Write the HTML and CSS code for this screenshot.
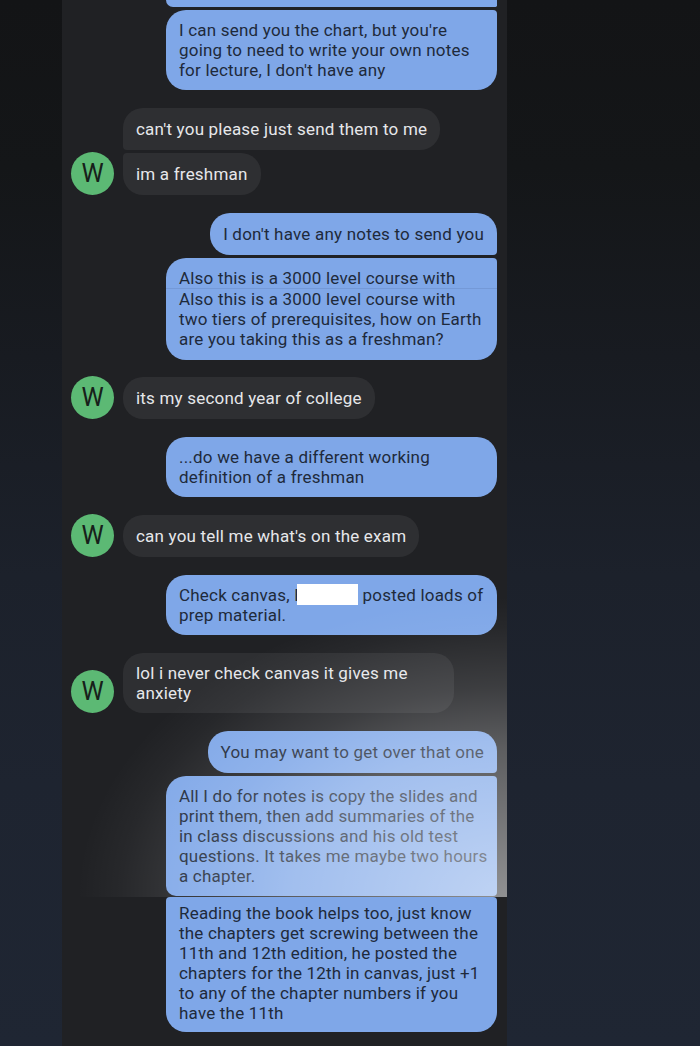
FILE: index.html
```html
<!DOCTYPE html>
<html lang="en">
<head>
<meta charset="utf-8">
<title>Conversation</title>
<link rel="stylesheet" href="styles.css">
</head>
<body>
<div class="stage">
  <div class="thread">
    <div class="msg out first"><div class="bubble cut"></div></div>

    <div class="msg out join">
      <div class="bubble multi r-tr">I can send you the chart, but you're<br>going to need to write your own notes<br>for lecture, I don't have any</div>
    </div>

    <div class="msg in">
      <span class="avatar blank"></span>
      <div class="bubble r-bl">can't you please just send them to me</div>
    </div>
    <div class="msg in join">
      <span class="avatar">W</span>
      <div class="bubble r-tl">im a freshman</div>
    </div>

    <div class="msg out">
      <div class="bubble r-br">I don't have any notes to send you</div>
    </div>
    <div class="msg out join">
      <div class="bubble multi seamed r-tr"><div class="dup">Also this is a 3000 level course with</div>Also this is a 3000 level course with<br>two tiers of prerequisites, how on Earth<br>are you taking this as a freshman?</div>
    </div>

    <div class="msg in tight">
      <span class="avatar">W</span>
      <div class="bubble">its my second year of college</div>
    </div>

    <div class="msg out">
      <div class="bubble multi">...do we have a different working<br>definition of a freshman</div>
    </div>

    <div class="msg in">
      <span class="avatar">W</span>
      <div class="bubble">can you tell me what's on the exam</div>
    </div>

    <div class="msg out">
      <div class="bubble multi">Check canvas, <span class="redact">E<span class="redact-box"></span></span> posted loads of<br>prep material.</div>
    </div>

    <div class="msg in">
      <span class="avatar">W</span>
      <div class="bubble multi">lol i never check canvas it gives me<br>anxiety</div>
    </div>

    <div class="msg out">
      <div class="bubble r-br">You may want to get over that one</div>
    </div>
    <div class="msg out join">
      <div class="bubble multi r-tr r-br r-bl-s">All I do for notes is copy the slides and<br>print them, then add summaries of the<br>in class discussions and his old test<br>questions. It takes me maybe two hours<br>a chapter.</div>
    </div>
    <div class="msg out stitch">
      <div class="bubble multi stitched r-tr r-tl">Reading the book helps too, just know<br>the chapters get screwing between the<br>11th and 12th edition, he posted the<br>chapters for the 12th in canvas, just +1<br>to any of the chapter numbers if you<br>have the 11th</div>
    </div>

    <div class="glare"></div>
  </div>
</div>
</body>
</html>
```

FILE: styles.css
```css
html, body {
  margin: 0;
  padding: 0;
}

body {
  background: #131416;
}

.stage {
  height: 1046px;
  overflow: hidden;
  padding-left: 62px;
  background: linear-gradient(180deg, #131416 0%, #141618 16%, #181b21 34%, #1c212b 55%, #1e2430 75%, #1f2633 100%);
}

.thread {
  position: relative;
  width: 445px;
  height: 1046px;
  box-sizing: border-box;
  padding: 0 10px 0 9px;
  background: #202124;
  display: flex;
  flex-direction: column;
  overflow: hidden;
}

.msg {
  display: flex;
  margin-top: 18px;
}

.msg.first { margin-top: 0; }
.msg.join { margin-top: 3px; }
.msg.tight { margin-top: 17px; }
.msg.stitch { margin-top: 1px; }

.msg.out { justify-content: flex-end; }

.msg.in {
  align-items: flex-end;
  gap: 9px;
}

.avatar {
  flex: 0 0 43px;
  width: 43px;
  height: 43px;
  margin-top: -1px;
  border-radius: 50%;
  background: #5cb974;
  color: #17201a;
  font: 400 25px/43px Roboto, "Noto Sans", sans-serif;
  text-align: center;
}

.avatar.blank {
  height: 0;
  margin-top: 0;
  visibility: hidden;
}

.bubble {
  box-sizing: border-box;
  max-width: 331px;
  padding: 11px 13px;
  border-radius: 20px;
  font: 400 17px/20px Roboto, "Noto Sans", sans-serif;
  letter-spacing: 0.2px;
  white-space: nowrap;
}

.out .bubble {
  background: #7fa7e8;
  color: #1e2a3b;
}

.in .bubble {
  background: #2e2f32;
  color: #e6e7ea;
}

.bubble.multi {
  width: 331px;
  padding: 10px 13px;
}

.bubble.cut {
  width: 331px;
  height: 7px;
  padding: 0;
  border-radius: 0 0 4px 20px;
}

.bubble.seamed { padding-bottom: 11px; }

.dup {
  margin: 0 -13px;
  padding: 0 13px;
  border-bottom: 1px solid rgba(40, 60, 100, 0.12);
}

.bubble.stitched {
  padding: 6px 13px 9px;
}

.r-tr { border-top-right-radius: 4px; }
.r-br { border-bottom-right-radius: 4px; }
.r-tl { border-top-left-radius: 4px; }
.r-bl { border-bottom-left-radius: 4px; }
.r-bl-s { border-bottom-left-radius: 10px; }

.redact {
  position: relative;
  display: inline-block;
  width: 64px;
  vertical-align: top;
}

.redact-box {
  position: absolute;
  left: 3px;
  top: -1px;
  width: 61px;
  height: 21px;
  background: #ffffff;
}

.glare {
  position: absolute;
  left: 0;
  right: 0;
  top: 597px;
  height: 300px;
  pointer-events: none;
  background: radial-gradient(ellipse 430px 300px at 100% 100%,
    rgba(255, 255, 255, 0.5) 0%,
    rgba(255, 255, 255, 0.27) 50%,
    rgba(255, 255, 255, 0.13) 70%,
    rgba(255, 255, 255, 0.03) 90%,
    rgba(255, 255, 255, 0) 100%);
}
```
